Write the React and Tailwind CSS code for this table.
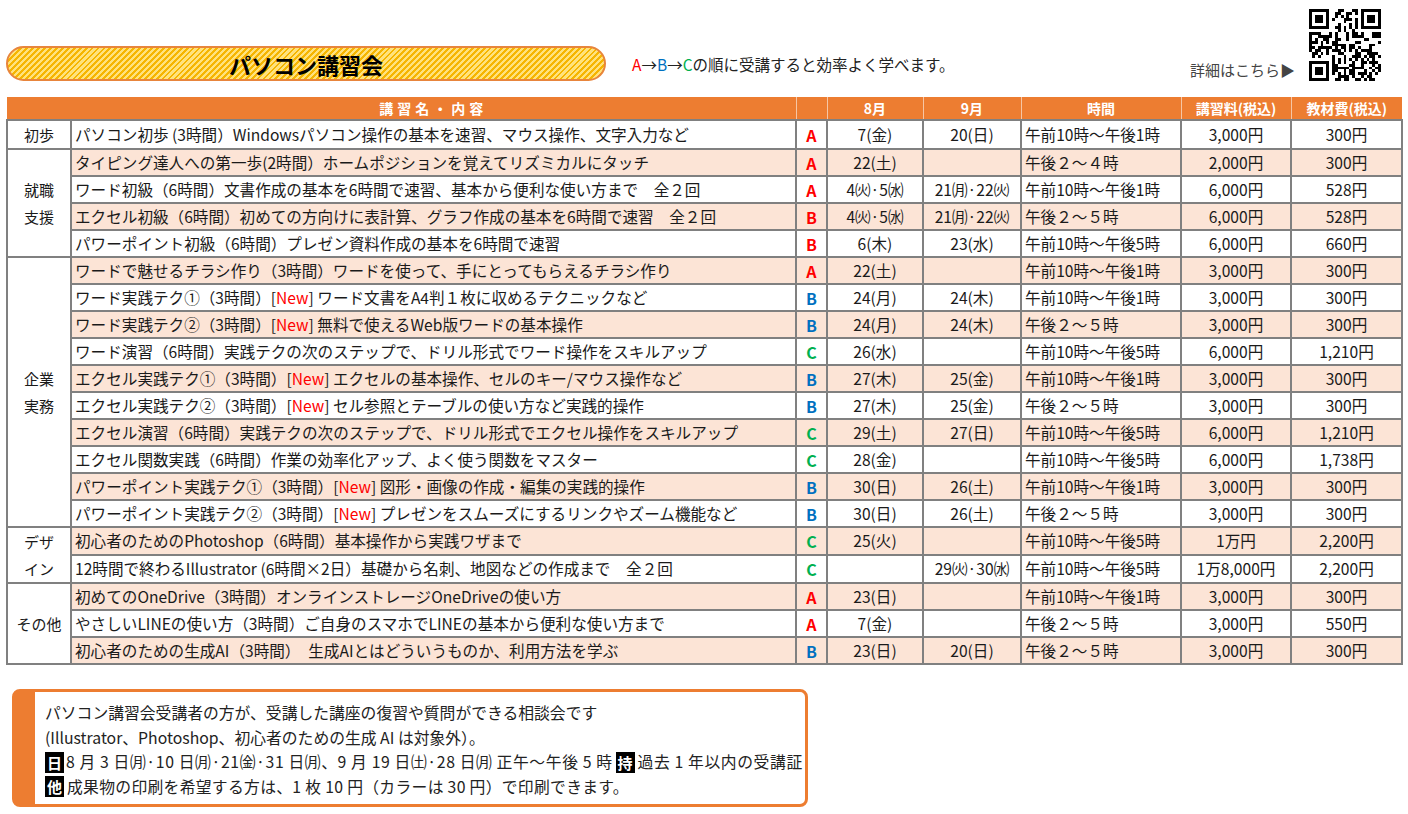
const RED = "text-[#ff0000]";
const BLUE = "text-[#0070c0]";
const GREEN = "text-[#00b050]";

const groups = [
  {
    label: ["初歩"],
    rows: [
      { t: "パソコン初歩 (3時間）Windowsパソコン操作の基本を速習、マウス操作、文字入力など", l: "A", c: RED, m8: "7(金)", m9: "20(日)", time: "午前10時～午後1時", fee: "3,000円", mat: "300円" },
    ],
  },
  {
    label: ["就職", "支援"],
    rows: [
      { t: "タイピング達人への第一歩(2時間）ホームポジションを覚えてリズミカルにタッチ", l: "A", c: RED, m8: "22(土)", m9: "", time: "午後２～４時", fee: "2,000円", mat: "300円" },
      { t: "ワード初級（6時間）文書作成の基本を6時間で速習、基本から便利な使い方まで　全２回", l: "A", c: RED, m8: "4㈫·5㈬", m9: "21㈪·22㈫", time: "午前10時～午後1時", fee: "6,000円", mat: "528円" },
      { t: "エクセル初級（6時間）初めての方向けに表計算、グラフ作成の基本を6時間で速習　全２回", l: "B", c: RED, m8: "4㈫·5㈬", m9: "21㈪·22㈫", time: "午後２～５時", fee: "6,000円", mat: "528円" },
      { t: "パワーポイント初級（6時間）プレゼン資料作成の基本を6時間で速習", l: "B", c: RED, m8: "6(木)", m9: "23(水)", time: "午前10時～午後5時", fee: "6,000円", mat: "660円" },
    ],
  },
  {
    label: ["企業", "実務"],
    rows: [
      { t: "ワードで魅せるチラシ作り（3時間）ワードを使って、手にとってもらえるチラシ作り", l: "A", c: RED, m8: "22(土)", m9: "", time: "午前10時～午後1時", fee: "3,000円", mat: "300円" },
      { t: "ワード実践テク①（3時間）", n: "ワード文書をA4判１枚に収めるテクニックなど", l: "B", c: BLUE, m8: "24(月)", m9: "24(木)", time: "午前10時～午後1時", fee: "3,000円", mat: "300円" },
      { t: "ワード実践テク②（3時間）", n: "無料で使えるWeb版ワードの基本操作", l: "B", c: BLUE, m8: "24(月)", m9: "24(木)", time: "午後２～５時", fee: "3,000円", mat: "300円" },
      { t: "ワード演習（6時間）実践テクの次のステップで、ドリル形式でワード操作をスキルアップ", l: "C", c: GREEN, m8: "26(水)", m9: "", time: "午前10時～午後5時", fee: "6,000円", mat: "1,210円" },
      { t: "エクセル実践テク①（3時間）", n: "エクセルの基本操作、セルのキー/マウス操作など", l: "B", c: BLUE, m8: "27(木)", m9: "25(金)", time: "午前10時～午後1時", fee: "3,000円", mat: "300円" },
      { t: "エクセル実践テク②（3時間）", n: "セル参照とテーブルの使い方など実践的操作", l: "B", c: BLUE, m8: "27(木)", m9: "25(金)", time: "午後２～５時", fee: "3,000円", mat: "300円" },
      { t: "エクセル演習（6時間）実践テクの次のステップで、ドリル形式でエクセル操作をスキルアップ", l: "C", c: GREEN, m8: "29(土)", m9: "27(日)", time: "午前10時～午後5時", fee: "6,000円", mat: "1,210円" },
      { t: "エクセル関数実践（6時間）作業の効率化アップ、よく使う関数をマスター", l: "C", c: GREEN, m8: "28(金)", m9: "", time: "午前10時～午後5時", fee: "6,000円", mat: "1,738円" },
      { t: "パワーポイント実践テク①（3時間）", n: "図形・画像の作成・編集の実践的操作", l: "B", c: BLUE, m8: "30(日)", m9: "26(土)", time: "午前10時～午後1時", fee: "3,000円", mat: "300円" },
      { t: "パワーポイント実践テク②（3時間）", n: "プレゼンをスムーズにするリンクやズーム機能など", l: "B", c: BLUE, m8: "30(日)", m9: "26(土)", time: "午後２～５時", fee: "3,000円", mat: "300円" },
    ],
  },
  {
    label: ["デザ", "イン"],
    rows: [
      { t: "初心者のためのPhotoshop（6時間）基本操作から実践ワザまで", l: "C", c: GREEN, m8: "25(火)", m9: "", time: "午前10時～午後5時", fee: "1万円", mat: "2,200円" },
      { t: "12時間で終わるIllustrator (6時間×2日）基礎から名刺、地図などの作成まで　全２回", l: "C", c: GREEN, m8: "", m9: "29㈫·30㈬", time: "午前10時～午後5時", fee: "1万8,000円", mat: "2,200円" },
    ],
  },
  {
    label: ["その他"],
    rows: [
      { t: "初めてのOneDrive（3時間）オンラインストレージOneDriveの使い方", l: "A", c: RED, m8: "23(日)", m9: "", time: "午前10時～午後1時", fee: "3,000円", mat: "300円" },
      { t: "やさしいLINEの使い方（3時間）ご自身のスマホでLINEの基本から便利な使い方まで", l: "A", c: RED, m8: "7(金)", m9: "", time: "午後２～５時", fee: "3,000円", mat: "550円" },
      { t: "初心者のための生成AI（3時間）　生成AIとはどういうものか、利用方法を学ぶ", l: "B", c: BLUE, m8: "23(日)", m9: "20(日)", time: "午後２～５時", fee: "3,000円", mat: "300円" },
    ],
  },
];

// qr-ish pattern
const QR_N = 25;
const qrCells = (() => {
  const out = [];
  let s = 12345;
  const inFinder = (x, y) =>
    (x < 8 && y < 8) || (x > 16 && y < 8) || (x < 8 && y > 16);
  for (let y = 0; y < QR_N; y++) {
    for (let x = 0; x < QR_N; x++) {
      if (inFinder(x, y)) continue;
      s = (s * 1103515245 + 12345) & 0x7fffffff;
      if ((s >> 16) & 1) out.push([x, y]);
    }
  }
  return out;
})();

const Finder = ({ x, y }) => (
  <g>
    <rect x={x} y={y} width="7" height="7" fill="#000" />
    <rect x={x + 1} y={y + 1} width="5" height="5" fill="#fff" />
    <rect x={x + 2} y={y + 2} width="3" height="3" fill="#000" />
  </g>
);

const QRCode = () => (
  <svg width="72" height="72" viewBox="0 0 25 25" shapeRendering="crispEdges">
    <rect width="25" height="25" fill="#fff" />
    {qrCells.map(([x, y]) => (
      <rect key={x + "-" + y} x={x} y={y} width="1" height="1" fill="#000" />
    ))}
    <Finder x={0} y={0} />
    <Finder x={18} y={0} />
    <Finder x={0} y={18} />
  </svg>
);

const cell = "border-2 border-[#808080] p-0";

const Tag = ({ children, className = "" }) => (
  <span className={`bg-black text-white font-bold w-[19px] h-[21px] leading-[21px] text-center text-[15px] tracking-normal ${className}`}>
    {children}
  </span>
);

const App = () => {
  let idx = 0;

  return (
    <div
      className="w-[1408px] h-[814px] bg-white text-[#1a1a1a] px-[6px]"
      style={{ fontFamily: '"Noto Sans CJK JP", "Noto Sans", sans-serif' }}
    >
      {/* top bar */}
      <div className="flex h-[97px] items-start">
        <div className="mt-[46px] w-[600px] h-[35px] rounded-full border-2 border-[#e8853c] bg-[repeating-linear-gradient(135deg,#f6b500_0px,#f6b500_2px,#ffe27d_2px,#ffe27d_4.2px)] flex items-center justify-center">
          <span className="text-[22px] font-bold text-black leading-none">パソコン講習会</span>
        </div>

        <p className="mt-[53px] ml-[26px] text-[15.5px] leading-[22px] text-[#222]">
          <span className={RED}>A</span>→<span className={BLUE}>B</span>→<span className={GREEN}>C</span>の順に受講すると効率よく学べます。
        </p>

        <div className="flex-1" />

        <p className="mt-[59px] text-[15px] leading-[22px] text-[#444]">詳細はこちら▶</p>

        <div className="mt-[9px] ml-[14px] mr-[21px]">
          <QRCode />
        </div>
      </div>

      {/* schedule table */}
      <table className="w-[1395px] table-fixed border-collapse text-[15.6px]">
        <colgroup>
          <col className="w-[64px]" />
          <col className="w-[725px]" />
          <col className="w-[31px]" />
          <col className="w-[96px]" />
          <col className="w-[98px]" />
          <col className="w-[160px]" />
          <col className="w-[110px]" />
          <col className="w-[111px]" />
        </colgroup>
        <thead>
          <tr className="h-[23px] bg-[#ed7d31] text-white text-[14px] font-bold leading-none">
            <th colSpan={2} className="pl-[64px] font-bold tracking-[4px]">講習名・内容</th>
            <th className="border-l border-[#f6c6a5]"></th>
            <th className="border-l border-[#f6c6a5]">8月</th>
            <th className="border-l border-[#f6c6a5]">9月</th>
            <th className="border-l border-[#f6c6a5]">時間</th>
            <th className="border-l border-[#f6c6a5]">講習料(税込)</th>
            <th className="border-l border-[#f6c6a5]">教材費(税込)</th>
          </tr>
        </thead>
        <tbody>
          {groups.map((g) =>
            g.rows.map((r, i) => {
              const bg = idx % 2 === 1 ? "bg-[#fce4d6]" : "bg-white";
              idx++;
              return (
                <tr key={r.t} className="h-[27px] leading-none">
                  {i === 0 && (
                    <td
                      rowSpan={g.rows.length}
                      className={`${cell} bg-white text-center text-[15px] leading-[27px]`}
                    >
                      {g.label.map((s) => (
                        <div key={s}>{s}</div>
                      ))}
                    </td>
                  )}
                  <td className={`${cell} ${bg} pl-[3px] whitespace-nowrap`}>
                    {r.t}
                    {r.n && (
                      <>
                        [<span className="text-[#ff0000]">New</span>] {r.n}
                      </>
                    )}
                  </td>
                  <td className={`${cell} ${bg} text-center font-bold text-[16px] ${r.c}`}>{r.l}</td>
                  <td className={`${cell} ${bg} text-center`}>{r.m8}</td>
                  <td className={`${cell} ${bg} text-center`}>{r.m9}</td>
                  <td className={`${cell} ${bg} pl-[3px]`}>{r.time}</td>
                  <td className={`${cell} ${bg} text-center`}>{r.fee}</td>
                  <td className={`${cell} ${bg} text-center`}>{r.mat}</td>
                </tr>
              );
            })
          )}
        </tbody>
      </table>

      {/* consultation box */}
      <div className="mt-[24px] ml-[6px] w-[796px] h-[118px] rounded-[8px] border-[3px] border-l-[23px] border-[#ed7d31] pl-[10px] pt-[9px] text-[15.8px] leading-[24.5px] text-[#222]">
        <p>パソコン講習会受講者の方が、受講した講座の復習や質問ができる相談会です</p>
        <p>(Illustrator、Photoshop、初心者のための生成 AI は対象外）。</p>
        <p className="flex items-center whitespace-nowrap tracking-[0.6px]">
          <Tag className="mr-[2px]">日</Tag>
          8 月 3 日㈪·10 日㈪·21㈮·31 日㈪、9 月 19 日㈯·28 日㈪ 正午～午後 5 時
          <Tag className="mx-[3px]">持</Tag>
          過去 1 年以内の受講証
        </p>
        <p className="flex items-center whitespace-nowrap tracking-[0.3px]">
          <Tag className="mr-[3px]">他</Tag>
          成果物の印刷を希望する方は、1 枚 10 円（カラーは 30 円）で印刷できます。
        </p>
      </div>
    </div>
  );
};

export default App;
